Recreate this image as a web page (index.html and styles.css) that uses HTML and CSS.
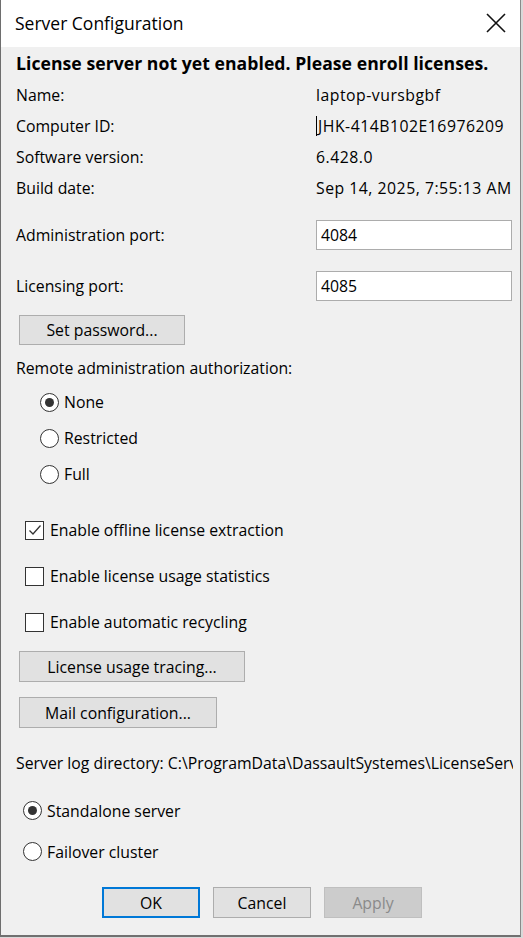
FILE: index.html
```html
<!DOCTYPE html>
<html>
<head>
<meta charset="utf-8">
<link rel="stylesheet" href="styles.css">
</head>
<body>
<div class="window">
  <div class="titlebar">
    <span class="title">Server Configuration</span>
    <svg class="close" width="22" height="22" viewBox="0 0 22 22"><path d="M2 2 L20 20 M20 2 L2 20" stroke="#111" stroke-width="1.6" fill="none"/></svg>
  </div>
  <div class="content">
    <div class="headline">License server not yet enabled. Please enroll licenses.</div>
    <div class="info"><span class="lbl">Name:</span><span class="val">laptop-vursbgbf</span></div>
    <div class="info"><span class="lbl">Computer ID:</span><span class="val"><span class="caret"></span>JHK-414B102E16976209</span></div>
    <div class="info"><span class="lbl">Software version:</span><span class="val">6.428.0</span></div>
    <div class="info"><span class="lbl">Build date:</span><span class="val">Sep 14, 2025, 7:55:13 AM</span></div>
    <div class="port port-admin"><span class="lbl">Administration port:</span><div class="input">4084</div></div>
    <div class="port port-lic"><span class="lbl">Licensing port:</span><div class="input">4085</div></div>
    <div class="btn btn-pass">Set password...</div>
    <div class="section-label">Remote administration authorization:</div>
    <div class="radios-auth">
      <div class="radio-row"><span class="radio checked"></span><span>None</span></div>
      <div class="radio-row"><span class="radio"></span><span>Restricted</span></div>
      <div class="radio-row"><span class="radio"></span><span>Full</span></div>
    </div>
    <div class="checks">
      <div class="check-row"><span class="check checked"><svg width="16" height="16" viewBox="0 0 16 16"><path d="M2.5 8.5 L6 12 L13.5 3.5" stroke="#333" stroke-width="1.3" fill="none"/></svg></span><span>Enable offline license extraction</span></div>
      <div class="check-row"><span class="check"></span><span>Enable license usage statistics</span></div>
      <div class="check-row"><span class="check"></span><span>Enable automatic recycling</span></div>
    </div>
    <div class="btn btn-trace">License usage tracing...</div>
    <div class="btn btn-mail">Mail configuration...</div>
    <div class="logdir">Server log directory: C:\ProgramData\DassaultSystemes\LicenseServer</div>
    <div class="radios-mode">
      <div class="radio-row"><span class="radio checked"></span><span>Standalone server</span></div>
      <div class="radio-row"><span class="radio"></span><span>Failover cluster</span></div>
    </div>
    <div class="actions">
      <div class="btn btn-ok">OK</div>
      <div class="btn btn-cancel">Cancel</div>
      <div class="btn btn-apply">Apply</div>
    </div>
  </div>
</div>
</body>
</html>
```
FILE: styles.css
```css
html, body {
  margin: 0;
  padding: 0;
  background: #d9d9d9;
}
body {
  width: 523px;
  height: 938px;
  overflow: hidden;
  font-family: "Open Sans", "Noto Sans", "Liberation Sans", sans-serif;
  font-size: 15.8px;
  color: #000;
}
.window {
  width: 519px;
  height: 935px;
  background: #f0f0f0;
  border-left: 1px solid #6e6e6e;
  border-right: 1px solid #8a8a8a;
  border-bottom: 2px solid #707070;
  box-sizing: content-box;
  overflow: hidden;
}
.titlebar {
  height: 47px;
  background: #fff;
  display: flex;
  align-items: center;
  justify-content: space-between;
  padding: 0 13px 0 14px;
}
.title {
  font-size: 17.5px;
  padding-bottom: 2px;
}
.close {
  display: block;
  margin-bottom: 2px;
}
.content {
  padding: 0 8px 0 15px;
}
.headline {
  height: 32px;
  line-height: 32px;
  font-weight: bold;
  font-size: 17.6px;
  letter-spacing: 0.05px;
  white-space: nowrap;
}
.info {
  height: 31px;
  display: flex;
  align-items: center;
}
.lbl {
  width: 300px;
  flex: none;
}
.val {
  display: flex;
  align-items: center;
  letter-spacing: 0.5px;
}
.caret {
  display: inline-block;
  width: 1px;
  height: 20px;
  background: #000;
  margin-right: 1px;
}
.port {
  display: flex;
  align-items: center;
}
.port-admin { margin-top: 17px; }
.port-lic { margin-top: 21px; }
.input {
  width: 194px;
  height: 28px;
  line-height: 28px;
  background: #fff;
  border: 1px solid #acacac;
  padding-left: 4px;
  box-sizing: content-box;
}
.btn {
  box-sizing: border-box;
  height: 31px;
  background: #e1e1e1;
  border: 1px solid #adadad;
  display: flex;
  align-items: center;
  justify-content: center;
}
.btn-pass {
  width: 166px;
  margin: 14px 0 0 3px;
  height: 30px;
}
.section-label {
  margin-top: 11px;
  height: 24px;
  line-height: 24px;
}
.radios-auth {
  margin-top: 4px;
  padding-left: 24px;
}
.radios-auth .radio-row { height: 36px; }
.radio-row {
  display: flex;
  align-items: center;
}
.radio {
  width: 19px;
  height: 19px;
  box-sizing: border-box;
  border: 1px solid #333;
  border-radius: 50%;
  background: #fff;
  margin-right: 5px;
  display: flex;
  align-items: center;
  justify-content: center;
}
.radio.checked::after {
  content: "";
  width: 9px;
  height: 9px;
  border-radius: 50%;
  background: #333;
}
.checks {
  margin-top: 15px;
  padding-left: 9px;
}
.check-row {
  height: 46px;
  display: flex;
  align-items: center;
}
.check {
  width: 19px;
  height: 19px;
  box-sizing: border-box;
  border: 1px solid #333;
  background: #fff;
  margin-right: 6px;
  display: flex;
  align-items: center;
  justify-content: center;
}
.check svg { display: block; }
.btn-trace {
  width: 226px;
  margin: 6px 0 0 3px;
}
.btn-mail {
  width: 198px;
  margin: 15px 0 0 3px;
}
.logdir {
  margin-top: 23px;
  height: 24px;
  line-height: 24px;
  white-space: nowrap;
  overflow: hidden;
  width: 497px;
}
.radios-mode {
  margin-top: 15px;
  padding-left: 7px;
}
.radios-mode .radio-row { height: 41px; }
.actions {
  margin: 15px 0 0 86px;
  display: flex;
  gap: 13px;
}
.actions .btn {
  width: 98px;
}
.btn-ok {
  border: 2px solid #0078d7;
  background: #e1e1e1;
}
.btn-apply {
  background: #cccccc;
  border-color: #bfbfbf;
  color: #8a8a8a;
}
```
